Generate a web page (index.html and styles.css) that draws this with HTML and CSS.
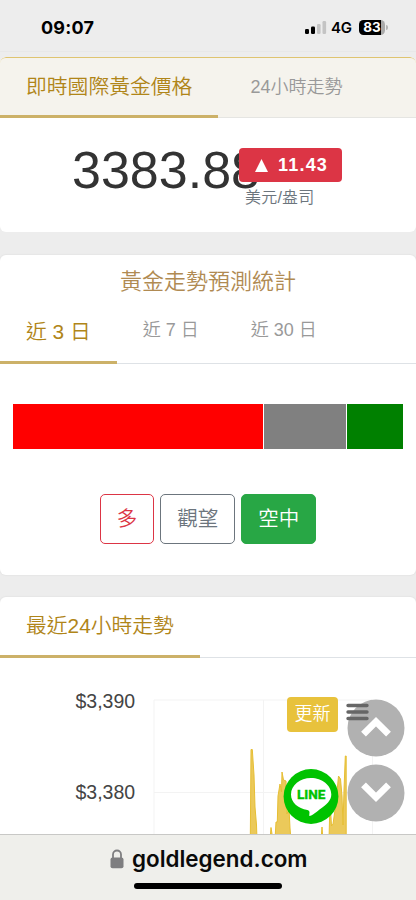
FILE: index.html
```
<!DOCTYPE html>
<html lang="zh-Hant">
<head>
<meta charset="utf-8">
<meta name="viewport" content="width=device-width, initial-scale=1">
<title>goldlegend.com</title>
<link rel="stylesheet" href="styles.css">
</head>
<body>
<header class="status">
  <span class="clock">09:07</span>
  <div class="signals">
    <svg class="cell" width="22" height="14" viewBox="0 0 22 14">
      <rect x="0" y="8" width="4" height="5" rx="1.2"/>
      <rect x="6" y="5.5" width="4" height="7.5" rx="1.2"/>
      <rect class="off" x="12" y="3" width="3.6" height="10" rx="1.2"/>
      <rect class="off" x="17.5" y="0" width="3.6" height="13" rx="1.2"/>
    </svg>
    <span class="net">4G</span>
    <span class="battery"><span class="level">83</span></span>
    <span class="nub"></span>
  </div>
</header>

<main>
  <section class="card price-card">
    <nav class="tabs tinted">
      <a class="tab active">即時國際黃金價格</a>
      <a class="tab">24小時走勢</a>
    </nav>
    <div class="quote">
      <span class="price">3383.88</span>
      <div class="change">
        <span class="badge"><svg width="13" height="13" viewBox="0 0 13 13"><path d="M6.5 0L13 13H0z"/></svg>11.43</span>
        <span class="unit">美元/盎司</span>
      </div>
    </div>
  </section>

  <section class="card forecast">
    <h2 class="title">黃金走勢預測統計</h2>
    <nav class="tabs">
      <a class="tab active">近 3 日</a>
      <a class="tab">近 7 日</a>
      <a class="tab">近 30 日</a>
    </nav>
    <div class="bars"><i class="up"></i><i class="flat"></i><i class="down"></i></div>
    <div class="buttons">
      <button class="btn red">多</button>
      <button class="btn gray">觀望</button>
      <button class="btn green">空中</button>
    </div>
  </section>

  <section class="card trend">
    <nav class="tabs"><a class="tab active">最近24小時走勢</a></nav>
    <div class="plot">
      <svg class="chart" width="416" height="176" viewBox="0 658 416 176">
        <path class="grid" d="M154 834V700H372M154 792.5H372M263.5 700V834M372.5 700V834"/>
        <path class="area" d="M250.3 840L251 749.5H252.3L254 775L255 807L256.5 825L257 840ZM270 840L271 827.5L273 840ZM275 840L276 822L277.3 822L278 796L280 784L281.5 792L282 772L283.5 780L286 781L287 814L289 808L290 828L291 840ZM321 840L322 827L323 840ZM329 840L330 800L331.5 826L333 824L335 810L337 792L338.5 776L340.5 779L342 796L343 825L344 790L345.3 756H346.2V840Z"/>
        <text class="axis" x="75.5" y="708">$3,390</text>
        <text class="axis" x="75.5" y="799">$3,380</text>
      </svg>
      <button class="refresh">更新</button>
    </div>
  </section>
</main>

<svg class="line" width="56" height="56" viewBox="0 0 56 56">
  <circle cx="28" cy="27.5" r="27.4" fill="#00c300"/>
  <path fill="#fff" d="M28 9.1C17 9.1 8 16.5 8 25.5C8 33.5 15 39.6 24.4 41C26.2 41.4 26.8 42.5 26.4 44.5L26.2 46.8C27.3 47.6 31 45 36.5 40.5C43.5 35.5 48.3 31.5 48.3 25.5C48.3 16.5 39 9.1 28 9.1Z"/>
  <text x="14" y="30.2" textLength="28.5" lengthAdjust="spacingAndGlyphs">LINE</text>
</svg>
<svg class="round up-btn" width="58" height="58" viewBox="0 0 58 58"><circle cx="29" cy="29" r="28.5"/><path d="M16.5 35.2L29 22.7L41.5 35.2"/></svg>
<svg class="round down-btn" width="58" height="58" viewBox="0 0 58 58"><circle cx="29" cy="29" r="28.5"/><path d="M16.5 20.8L29 33.3L41.5 20.8"/></svg>
<svg class="menu" width="23" height="18" viewBox="0 0 23 18"><path d="M2 2.5H21M2 9H21M2 15.5H21"/></svg>

<footer class="browser">
  <div class="address">
    <svg width="14" height="20" viewBox="0 0 14 20"><path d="M3 10V5.5a4 4 0 0 1 8 0V10" fill="none" stroke="#7e7e80" stroke-width="1.8"/><rect x="0.5" y="8.5" width="13" height="10.8" rx="2" fill="#7e7e80"/></svg>
    <span>goldlegend.com</span>
  </div>
  <div class="home"></div>
</footer>
</body>
</html>
```
FILE: styles.css
```
* { box-sizing: border-box; }
body {
  margin: 0;
  width: 416px;
  height: 900px;
  overflow: hidden;
  position: relative;
  display: flex;
  flex-direction: column;
  background: #ededed;
  font-family: "Liberation Sans", "Noto Sans CJK TC", sans-serif;
  font-weight: 350;
  color: #333;
}
.status {
  height: 52px;
  flex: none;
  display: flex;
  justify-content: space-between;
  padding: 15px 28px 0 41px;
  border-bottom: 1px solid #e8e8e8;
  font-family: Inter, sans-serif;
  color: #000;
}
.clock { font-size: 18px; line-height: 25px; font-weight: 700; letter-spacing: .2px; }
.signals { display: flex; align-items: center; height: 25px; }
.cell .off { fill: #c4c4c4; }
.net { margin-left: 4px; font-size: 15px; font-weight: 600; width: 22px; letter-spacing: -.2px; }
.battery {
  margin-left: 6px;
  width: 26px;
  height: 15px;
  border-radius: 4.5px;
  background: linear-gradient(90deg, #000 22px, #aaa 22px);
  color: #fff;
  display: flex;
}
.level { width: 27px; text-align: center; font-size: 13.5px; line-height: 15px; font-weight: 700; }
.nub { width: 2px; height: 5px; margin-left: 1px; border-radius: 0 3px 3px 0; background: #b4b4b4; }

main { flex: 1; min-height: 0; overflow: hidden; padding-top: 5px; display: flex; flex-direction: column; }
.card { flex: none; background: #fff; border-radius: 6px; overflow: hidden; box-shadow: 0 0 1px 1px #e6e6e6; }
.tabs { display: flex; border-bottom: 1px solid #dee2e6; }
.tab {
  padding: 0 26px;
  font-size: 18px;
  color: #999;
  white-space: nowrap;
  border-bottom: 3px solid transparent;
  margin-bottom: -1px;
}
.tab.active { font-size: 20.8px; color: #b08518; border-color: #ccb168; }

.price-card { height: 175px; margin-bottom: 23px; box-shadow: none; }
.tinted {
  height: 61px;
  background: #f5f3ed;
  border-bottom-color: #e5e5e2;
  border-top: 1px solid #dfc470;
  border-radius: 6px 6px 0 0;
}
.tinted .tab { line-height: 59px; height: 60px; }
.tinted .tab.active { line-height: 57px; margin-right: 6px; }
.quote { display: flex; padding: 22px 0 0 72px; }
.price { width: 167px; font-size: 52px; line-height: 60px; white-space: nowrap; }
.change { position: relative; display: flex; flex-direction: column; padding-top: 8px; }
.badge {
  width: 103px;
  height: 34px;
  border-radius: 4px;
  background: #dc3545;
  color: #fff;
  display: flex;
  align-items: center;
  padding-left: 16px;
  gap: 10px;
  font-size: 18px;
  font-weight: 700;
  letter-spacing: 1.2px;
}
.badge svg { fill: #fff; }
.unit { margin: 4px 0 0 6px; font-size: 16px; line-height: 24px; color: #6c757d; letter-spacing: .2px; }

.forecast { height: 320px; margin-bottom: 22px; }
.title { margin: 0; height: 49px; padding-top: 11px; line-height: 31px; font-size: 22px; font-weight: 350; text-align: center; color: #b08a52; }
.forecast .tabs { height: 60px; }
.forecast .tab { line-height: 52px; height: 60px; }
.forecast .tab.active { line-height: 55px; }
.bars { display: flex; gap: 1px; margin: 40px 13px 0; height: 45px; }
.bars i { display: block; }
.up { width: 250px; background: #f00; }
.flat { width: 82px; background: #808080; }
.down { flex: 1; background: #008000; }
.buttons { display: flex; justify-content: center; gap: 6px; margin-top: 45px; }
.btn {
  height: 50px;
  padding: 0 16px;
  border: 1px solid;
  border-radius: 5px;
  background: #fff;
  font: 350 20.5px/48px "Liberation Sans", "Noto Sans CJK TC", sans-serif;
}
.red { color: #dc3545; }
.gray { color: #6c757d; }
.green { color: #fff; background: #28a745; border-color: #28a745; }

.trend { height: 260px; }
.trend .tabs { height: 61px; }
.trend .tab { line-height: 57px; height: 61px; }
.plot { position: relative; }
.chart { display: block; }
.grid { fill: none; stroke: #f3f3f3; stroke-width: 1; }
.area { fill: #ebc95a; stroke: #e6be33; stroke-width: 1; }
.axis { font-size: 19.5px; fill: #444; }
.refresh {
  position: absolute;
  left: 287px;
  top: 39px;
  width: 51px;
  height: 35px;
  padding: 0 0 4px;
  border: 0;
  border-radius: 4px;
  background: #e8c23c;
  color: #fff;
  font: 350 18px/29px "Noto Sans CJK TC", sans-serif;
}
.menu { position: absolute; left: 346px; top: 703px; }
.menu path { fill: none; stroke: #666; stroke-width: 3.4; stroke-linecap: round; }
.line, .round { position: absolute; }
.line { left: 283px; top: 769px; }
.line text { font: 700 13.6px Roboto, sans-serif; fill: #00c300; stroke: #00c300; stroke-width: .4; }
.round { left: 347px; }
.up-btn { top: 699px; }
.down-btn { top: 764px; }
.round circle { fill: #b1b1b1; }
.round path { fill: none; stroke: #fff; stroke-width: 6.8; }

.browser { position: relative; height: 66px; flex: none; background: #efefeb; border-top: 1px solid #c8c8c6; }
.address { display: flex; align-items: center; gap: 8px; height: 48px; padding-left: 110px; }
.address span { font: 600 22.4px/30px Inter, sans-serif; color: #0a0a0a; }
.home { width: 148px; height: 6px; margin: 0 auto; border-radius: 3px; background: #000; }
```
